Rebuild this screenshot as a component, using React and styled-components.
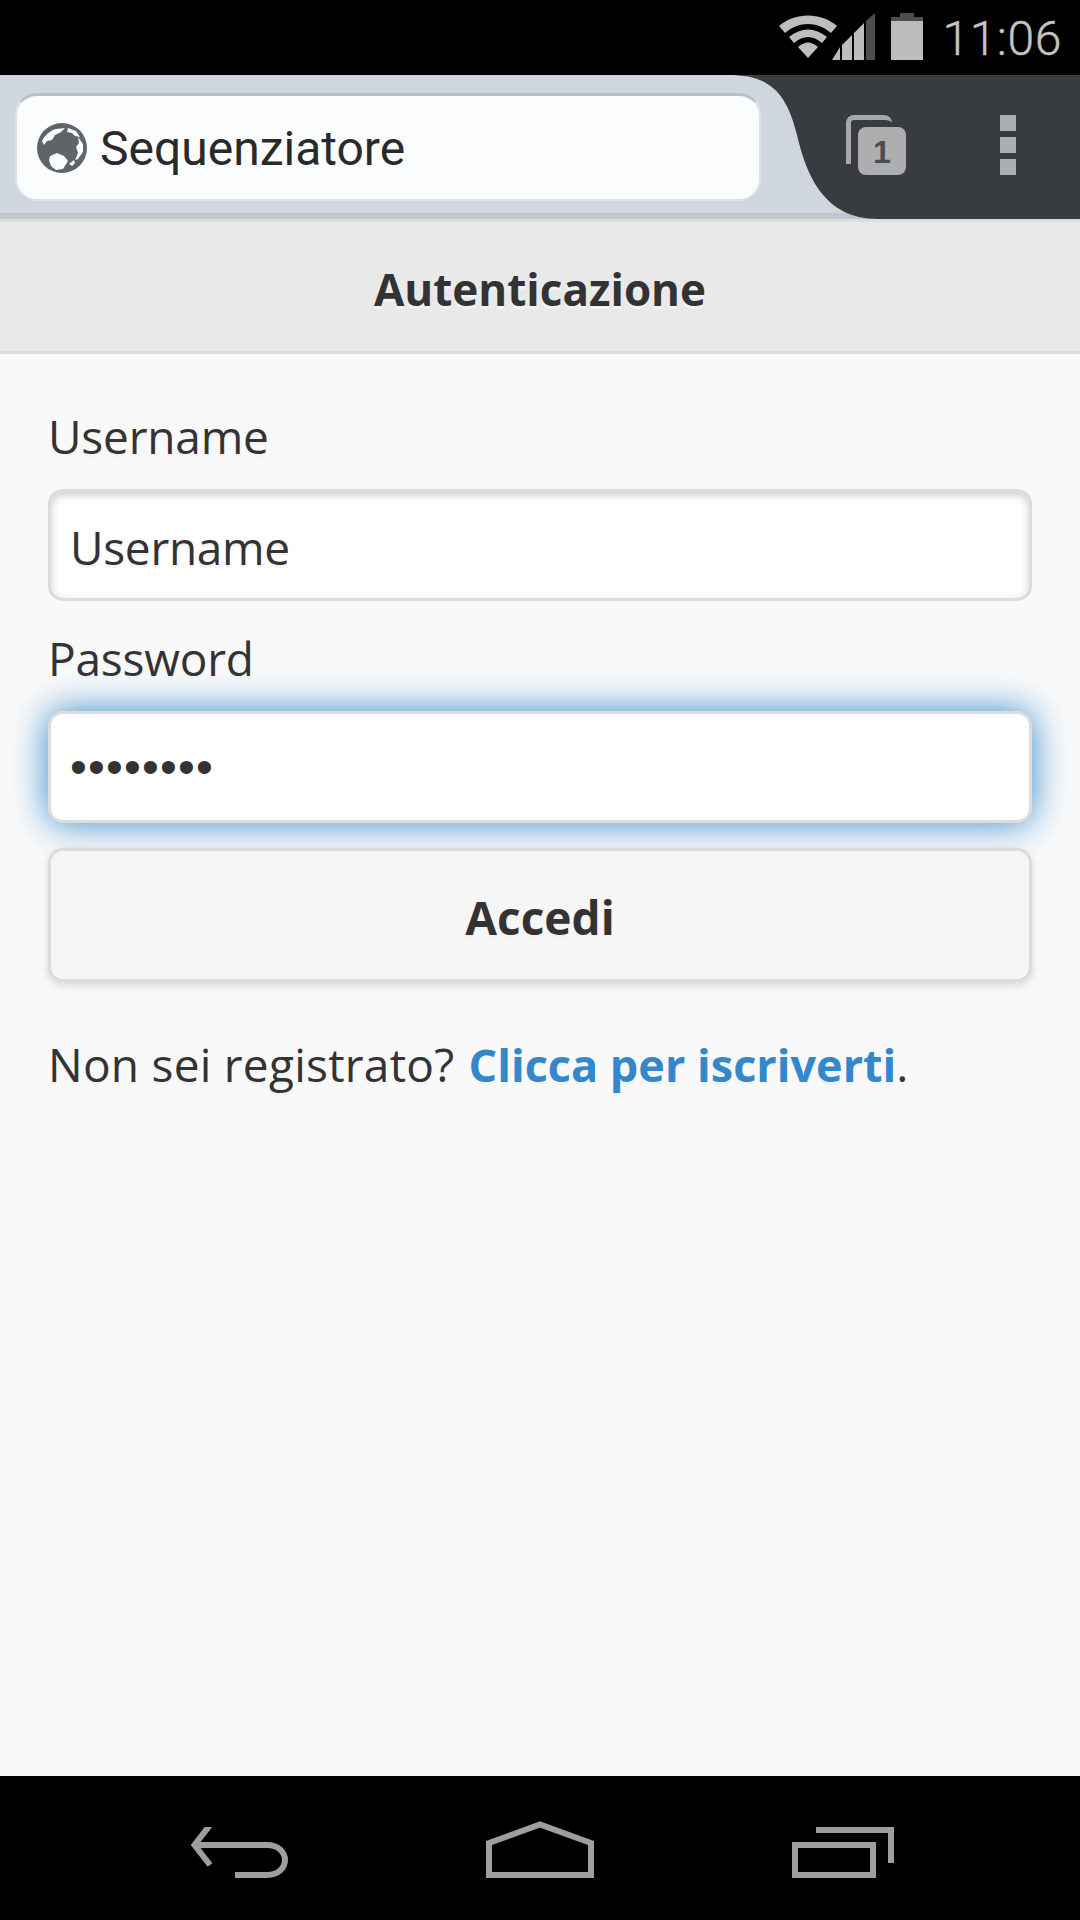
import React from "react";
import styled, { createGlobalStyle } from "styled-components";

const GlobalStyle = createGlobalStyle`
  html, body {
    margin: 0;
    padding: 0;
    background: #000;
  }
  * {
    box-sizing: border-box;
  }
`;

const Phone = styled.div`
  width: 1080px;
  height: 1920px;
  display: flex;
  flex-direction: column;
  background: #000;
  overflow: hidden;
`;

const StatusBar = styled.div`
  height: 75px;
  flex: none;
  display: flex;
  align-items: flex-start;
  justify-content: flex-end;
  padding: 13px 18px 0 0;
  background: #000;
`;

const StatusIcon = styled.svg`
  display: block;
  flex: none;
  margin-right: ${(p) => p.$gap || 0}px;
`;

const Clock = styled.div`
  font-family: Roboto, sans-serif;
  font-weight: 300;
  font-size: 48px;
  line-height: 52px;
  letter-spacing: 0.6px;
  color: #c4c4c4;
  margin-left: 19px;
  -webkit-text-stroke: 0.4px #c4c4c4;
`;

const Toolbar = styled.div`
  height: 144px;
  flex: none;
  display: flex;
  background: #383c40;
`;

const TabStrip = styled.div`
  width: 878px;
  flex: none;
  position: relative;
  background: #cfd6dd;
  border-bottom: 6px solid #bcc6cf;
  padding: 18px 0 0 15px;
`;

const TabCurve = styled.svg`
  position: absolute;
  top: 0;
  right: 0;
`;

const UrlBar = styled.div`
  width: 746px;
  height: 108px;
  display: flex;
  align-items: center;
  padding: 1px 0 0 20px;
  background: #fbfcfe;
  border: 2px solid #dde2e8;
  border-top: 3px solid #b5bfc9;
  border-radius: 22px;
`;

const UrlText = styled.span`
  font-family: Roboto, sans-serif;
  font-size: 48px;
  color: #2a2a2a;
  margin-left: 13px;
`;

const ToolButtons = styled.div`
  flex: 1;
  display: flex;
  padding-top: 40px;
`;

const TabsButton = styled.div`
  width: 60px;
  height: 60px;
  margin-left: -32px;
  position: relative;
`;

const TabsBack = styled.div`
  width: 46px;
  height: 49px;
  border: 5px solid #a6a8aa;
  border-right: none;
  border-bottom: none;
  border-radius: 8px 8px 0 0;
`;

const TabsFront = styled.div`
  position: absolute;
  left: 12px;
  top: 12px;
  width: 48px;
  height: 48px;
  border-radius: 8px;
  background: #adaeaf;
  color: #4a4e52;
  font-family: "Liberation Sans", sans-serif;
  font-weight: 700;
  font-size: 32px;
  line-height: 50px;
  text-align: center;
`;

const Dots = styled.div`
  display: flex;
  flex-direction: column;
  gap: 6px;
  margin-left: 94px;
`;

const Dot = styled.div`
  width: 16px;
  height: 16px;
  background: #adaeaf;
`;

const Page = styled.div`
  flex: 1;
  display: flex;
  flex-direction: column;
  background: #f9f9f9;
  font-family: "Open Sans", sans-serif;
  color: #333;
  text-shadow: 0 3px 0 #f3f3f3;
`;

const Header = styled.div`
  height: 135px;
  flex: none;
  display: flex;
  align-items: center;
  justify-content: center;
  padding-top: 5px;
  background: #e9e9e9;
  border-top: 3px solid #dcdcdc;
  border-bottom: 3px solid #dedede;
  font-size: 44px;
  font-weight: 700;
`;

const Content = styled.div`
  flex: 1;
  display: flex;
  flex-direction: column;
  padding: 57px 48px 0;
`;

const Label = styled.label`
  display: block;
  height: 78px;
  font-size: 46px;
  line-height: 50px;
  letter-spacing: -0.2px;
`;

const Field = styled.div`
  height: 112px;
  display: flex;
  align-items: center;
  padding: 4px 0 0 19px;
  background: #fff;
  border: 3px solid #dcdcdc;
  border-radius: 15px;
  font-size: 46px;
  letter-spacing: -0.3px;
  margin-bottom: ${(p) => p.$mb}px;
  box-shadow: ${(p) =>
    p.$focus ? "0 0 36px #3388cc" : "inset 0 3px 9px rgba(0, 0, 0, 0.2)"};
`;

const Masked = styled.span`
  letter-spacing: 1.2px;
  font-size: 48px;
  line-height: 48px;
  margin-top: -4px;
  font-family: "Liberation Sans", sans-serif;
  text-shadow: none;
`;

const SubmitButton = styled.button`
  width: 100%;
  height: 134px;
  flex: none;
  padding: 3px 0 0;
  background: #f6f6f6;
  border: 3px solid #dcdcdc;
  border-radius: 15px;
  box-shadow: 0 3px 9px rgba(0, 0, 0, 0.15);
  font-family: inherit;
  font-size: 46px;
  font-weight: 700;
  color: #333;
  text-shadow: inherit;
`;

const Register = styled.p`
  margin: 55px 0 0;
  font-size: 46px;
  line-height: 54px;
  letter-spacing: 0.25px;
`;

const RegisterLink = styled.a`
  color: #3388cc;
  font-size: 45px;
  font-weight: 700;
  letter-spacing: 0;
  margin-left: 2px;
`;

const NavBar = styled.div`
  height: 144px;
  flex: none;
  display: flex;
  justify-content: center;
  align-items: flex-end;
  padding: 0 0 42px 4px;
  gap: 198px;
  background: #000;
`;

const NavIcon = styled.svg`
  display: block;
  flex: none;
  fill: none;
  stroke: #9e9e9e;
  stroke-width: 6;
`;

function Globe() {
  return (
    <svg width="50" height="50" viewBox="0 0 50 50">
      <circle cx="25" cy="25" r="25" fill="#5f6468" />
      <path
        d="M5 18c3-6 9-11 14-12l9-1-4 4-6 3-3 5-5 1-3 4zM31 5l8 3 4 6-5-1-3-3-5-1zM13 33l7-3 7 3 4 5-5 8-7 1-5-4-2-6zM41 14l5 7 0 8-5 7-3 1 3-7-2-6 3-4zM32 41l5-4 1 3-3 3z"
        fill="#fbfcfe"
      />
    </svg>
  );
}

export default function App() {
  return (
    <Phone>
      <GlobalStyle />
      <StatusBar>
        <StatusIcon width="58" height="47" viewBox="0 0 58 47" $gap={-5}>
          <path
            d="M0 13 C16 -1 42 -1 58 13 L52 20 C38 8 20 8 6 20Z M10 24 C22 14 36 14 48 24 L43 30 C34 22 24 22 15 30Z M19 34 C26 28 32 28 39 34 L29 45Z"
            fill="#bdbdbd"
          />
        </StatusIcon>
        <StatusIcon width="43" height="47" viewBox="0 0 43 47" $gap={16}>
          <path d="M43 0V47H34V8Z" fill="#4d4d4d" />
          <path d="M32 10V47H22V20ZM20 22V47H10V32ZM8 34V47H0Z" fill="#bdbdbd" />
        </StatusIcon>
        <StatusIcon width="32" height="47" viewBox="0 0 32 47">
          <path d="M9 0H23V4H32V47H0V4H9Z" fill="#bdbdbd" />
          <path d="M9 0H23V4H32V8H0V4H9Z" fill="#4d4d4d" />
        </StatusIcon>
        <Clock>11:06</Clock>
      </StatusBar>

      <Toolbar>
        <TabStrip>
          <UrlBar>
            <Globe />
            <UrlText>Sequenziatore</UrlText>
          </UrlBar>
          <TabCurve width="150" height="144" viewBox="0 0 150 144">
            <path
              d="M0 0C40 0 58 15 69 60C78 98 95 144 150 144V0Z"
              fill="#383c40"
            />
          </TabCurve>
        </TabStrip>
        <ToolButtons>
          <TabsButton>
            <TabsBack />
            <TabsFront>1</TabsFront>
          </TabsButton>
          <Dots>
            <Dot />
            <Dot />
            <Dot />
          </Dots>
        </ToolButtons>
      </Toolbar>

      <Page>
        <Header>Autenticazione</Header>
        <Content>
          <Label>Username</Label>
          <Field $mb={32}>Username</Field>
          <Label>Password</Label>
          <Field $focus $mb={25}>
            <Masked>••••••••</Masked>
          </Field>
          <SubmitButton>Accedi</SubmitButton>
          <Register>
            Non sei registrato? <RegisterLink>Clicca per iscriverti</RegisterLink>.
          </Register>
        </Content>
      </Page>

      <NavBar>
        <NavIcon width="98" height="51" viewBox="0 0 98 51">
          <path d="M20 -2L4.5 18L20 38" />
          <path d="M4 18H77C89 18 95 26 95 33C95 40 89 48 77 48H45" />
        </NavIcon>
        <NavIcon width="108" height="57" viewBox="0 0 108 57">
          <path d="M3 22V54H105V22L54 3.5Z" />
        </NavIcon>
        <NavIcon width="102" height="51" viewBox="0 0 102 51">
          <path d="M3 18H81V48H3Z" />
          <path d="M24 3H99V36" />
        </NavIcon>
      </NavBar>
    </Phone>
  );
}
